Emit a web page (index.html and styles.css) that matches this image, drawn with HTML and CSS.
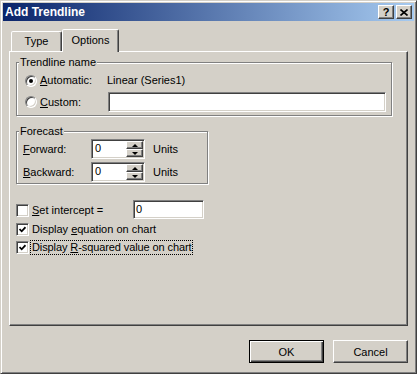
FILE: index.html
```html
<!DOCTYPE html>
<html lang="en">
<head>
    <meta charset="UTF-8">
    <meta name="viewport" content="width=device-width, initial-scale=1.0">
    <title>Add Trendline</title>
    <link rel="stylesheet" href="styles.css">
</head>
<body>
    <div class="window">
        <div class="titlebar">
            <span class="title">Add Trendline</span>
            <div class="title-buttons">
                <span class="tbtn help">?</span>
                <span class="tbtn close">
                    <svg width="8" height="7" viewBox="0 0 8 7"><path d="M0.5 0.5L7.5 6.5M7.5 0.5L0.5 6.5" stroke="#000" stroke-width="1.6" fill="none"/></svg>
                </span>
            </div>
        </div>

        <div class="tabs">
            <div class="tab">Type</div>
            <div class="tab active">Options</div>
        </div>

        <div class="panel">
            <div class="group group-name">
                <div class="group-title">Trendline name</div>
                <div class="name-grid">
                    <label class="opt">
                        <span class="radio"><span class="dot"></span></span>
                        <span><u>A</u>utomatic:</span>
                    </label>
                    <span class="auto-value">Linear (Series1)</span>
                    <label class="opt">
                        <span class="radio"></span>
                        <span><u>C</u>ustom:</span>
                    </label>
                    <span class="edit custom-edit"></span>
                </div>
            </div>

            <div class="group group-forecast">
                <div class="group-title">Forecast</div>
                <div class="fc-rows">
                    <div class="fc-row">
                        <span class="fc-label"><u>F</u>orward:</span>
                        <span class="spin">
                            <span class="spin-value">0</span>
                            <span class="spin-btns">
                                <span class="spin-btn"><span class="arrow-up"></span></span>
                                <span class="spin-btn"><span class="arrow-down"></span></span>
                            </span>
                        </span>
                        <span class="units">Units</span>
                    </div>
                    <div class="fc-row">
                        <span class="fc-label"><u>B</u>ackward:</span>
                        <span class="spin">
                            <span class="spin-value">0</span>
                            <span class="spin-btns">
                                <span class="spin-btn"><span class="arrow-up"></span></span>
                                <span class="spin-btn"><span class="arrow-down"></span></span>
                            </span>
                        </span>
                        <span class="units">Units</span>
                    </div>
                </div>
            </div>

            <div class="check-row intercept-row">
                <label class="chk intercept-label">
                    <span class="check"></span>
                    <span class="chk-text"><u>S</u>et intercept =</span>
                </label>
                <span class="edit intercept-edit">0</span>
            </div>

            <div class="check-row equation-row">
                <label class="chk">
                    <span class="check">
                        <svg width="7" height="7" viewBox="0 0 7 7"><path d="M0.5 3L2.7 5.3L6.5 1.2" stroke="#000" stroke-width="1.8" fill="none"/></svg>
                    </span>
                    <span class="chk-text">Display <u>e</u>quation on chart</span>
                </label>
            </div>

            <div class="check-row rsq-row">
                <label class="chk">
                    <span class="check">
                        <svg width="7" height="7" viewBox="0 0 7 7"><path d="M0.5 3L2.7 5.3L6.5 1.2" stroke="#000" stroke-width="1.8" fill="none"/></svg>
                    </span>
                    <span class="chk-text focused">Display <u>R</u>-squared value on chart</span>
                </label>
            </div>
        </div>

        <div class="buttons">
            <button type="button" class="btn default">OK</button>
            <button type="button" class="btn">Cancel</button>
        </div>
    </div>
</body>
</html>
```

FILE: styles.css
```css
:root {
    --face: #d4d0c8;
    --shadow: #808080;
    --dark: #404040;
    --light: #ffffff;
}

body {
    margin: 0;
    background: var(--face);
    font-family: 'Liberation Sans', Arial, sans-serif;
    font-size: 11px;
    line-height: 13px;
    color: #000;
}

u {
    text-decoration: underline;
    text-underline-offset: 1px;
}

.window {
    width: 417px;
    height: 374px;
    box-sizing: border-box;
    border: 1px solid;
    border-color: var(--face) var(--dark) var(--dark) var(--face);
    box-shadow: inset 1px 1px var(--light), inset -1px -1px var(--shadow);
    padding: 2px;
    background: var(--face);
}

/* title bar */
.titlebar {
    height: 18px;
    display: flex;
    align-items: center;
    justify-content: space-between;
    padding: 0 2px;
    background: linear-gradient(to right, #0a246a, #a6caf0);
}

.title {
    color: #fff;
    font-weight: bold;
    font-size: 12px;
}

.title-buttons {
    display: flex;
    gap: 2px;
}

.tbtn {
    width: 16px;
    height: 14px;
    box-sizing: border-box;
    display: flex;
    align-items: center;
    justify-content: center;
    background: var(--face);
    border: 1px solid;
    border-color: var(--light) var(--dark) var(--dark) var(--light);
    box-shadow: inset -1px -1px var(--shadow);
    font-weight: bold;
    font-size: 11px;
    line-height: 12px;
}

/* tabs */
.tabs {
    display: flex;
    align-items: flex-end;
    height: 22px;
    margin: 8px 0 0 8px;
}

.tab {
    height: 20px;
    width: 51px;
    box-sizing: border-box;
    border: 1px solid;
    border-bottom: none;
    border-color: var(--light) var(--dark) transparent var(--light);
    box-shadow: inset -1px 0 var(--shadow);
    border-radius: 2px 2px 0 0;
    padding-top: 3px;
    text-align: center;
    background: var(--face);
}

.tab.active {
    height: 23px;
    width: 57px;
    margin-bottom: -1px;
    padding-top: 4px;
    position: relative;
    z-index: 1;
}

/* tab panel */
.panel {
    margin-left: 6px;
    width: 399px;
    height: 275px;
    box-sizing: border-box;
    border: 1px solid;
    border-color: var(--light) var(--dark) var(--dark) var(--light);
    box-shadow: inset -1px -1px var(--shadow);
    padding: 10px 0 0 6px;
}

.group {
    box-sizing: border-box;
    border: 1px solid var(--shadow);
    box-shadow: inset 1px 1px var(--light), 1px 1px var(--light);
}

.group-title {
    width: fit-content;
    margin: -7px 0 0 2px;
    padding: 0 1px;
    background: var(--face);
}

.group-name {
    width: 376px;
    padding-bottom: 3px;
}

.name-grid {
    display: grid;
    grid-template-columns: 82px 279px;
    grid-template-rows: 13px 20px;
    row-gap: 5px;
    align-items: center;
    margin: 5px 0 0 8px;
}

.opt {
    display: flex;
    align-items: center;
    gap: 3px;
}

.radio {
    width: 12px;
    height: 12px;
    box-sizing: border-box;
    border-radius: 50%;
    border: 1px solid;
    border-color: var(--shadow) var(--light) var(--light) var(--shadow);
    box-shadow: inset 1px 1px var(--dark), inset -1px -1px var(--face);
    background: #fff;
    display: flex;
    align-items: center;
    justify-content: center;
}

.dot {
    width: 4px;
    height: 4px;
    border-radius: 50%;
    background: #000;
}

.edit {
    display: block;
    box-sizing: border-box;
    height: 20px;
    border: 1px solid;
    border-color: var(--shadow) var(--light) var(--light) var(--shadow);
    box-shadow: inset 1px 1px var(--dark), inset -1px -1px var(--face);
    background: #fff;
    padding: 2px 0 0 2px;
}

.custom-edit {
    margin-left: 1px;
    width: 278px;
}

.group-forecast {
    width: 192px;
    margin-top: 15px;
}

.fc-rows {
    margin: 1px 0 1px 6px;
    display: flex;
    flex-direction: column;
    gap: 3px;
}

.fc-row {
    display: flex;
    align-items: center;
    height: 20px;
}

.fc-label {
    width: 68px;
}

.spin {
    display: flex;
    width: 54px;
    height: 20px;
    box-sizing: border-box;
    border: 1px solid;
    border-color: var(--shadow) var(--light) var(--light) var(--shadow);
    box-shadow: inset 1px 1px var(--dark), inset -1px -1px var(--face);
    background: #fff;
    padding: 1px;
}

.spin-value {
    flex: 1;
    padding: 1px 0 0 2px;
}

.spin-btns {
    width: 17px;
    display: flex;
    flex-direction: column;
}

.spin-btn {
    flex: 1;
    box-sizing: border-box;
    display: flex;
    align-items: center;
    justify-content: center;
    background: var(--face);
    border: 1px solid;
    border-color: var(--light) var(--dark) var(--dark) var(--light);
    box-shadow: inset -1px -1px var(--shadow);
}

.arrow-up,
.arrow-down {
    width: 0;
    height: 0;
    border-left: 3px solid transparent;
    border-right: 3px solid transparent;
}

.arrow-up {
    border-bottom: 3px solid #000;
}

.arrow-down {
    border-top: 3px solid #000;
}

.units {
    margin-left: 8px;
}

/* check boxes */
.check-row {
    display: flex;
    align-items: center;
}

.intercept-row {
    margin-top: 16px;
    height: 19px;
    align-items: flex-start;
}

.intercept-label {
    width: 117px;
    margin-top: 4px;
}

.intercept-edit {
    width: 71px;
    height: 19px;
    padding: 2px 0 0 2px;
}

.equation-row {
    margin-top: 4px;
    height: 13px;
}

.rsq-row {
    margin-top: 4px;
    height: 15px;
}

.chk {
    display: flex;
    align-items: center;
}

.check {
    width: 13px;
    height: 13px;
    box-sizing: border-box;
    border: 1px solid;
    border-color: var(--shadow) var(--light) var(--light) var(--shadow);
    box-shadow: inset 1px 1px var(--dark), inset -1px -1px var(--face);
    background: #fff;
    display: flex;
    align-items: center;
    justify-content: center;
}

.chk-text {
    margin-left: 3px;
}

.chk-text.focused {
    margin-left: 1px;
    padding: 0 1px;
    border: 1px dotted #000;
    letter-spacing: -0.1px;
}

/* dialog buttons */
.buttons {
    display: flex;
    justify-content: flex-end;
    gap: 9px;
    width: 399px;
    margin: 14px 0 0 6px;
}

.btn {
    width: 75px;
    height: 23px;
    box-sizing: border-box;
    font-family: inherit;
    font-size: 11px;
    color: #000;
    background: var(--face);
    border: 1px solid;
    border-color: var(--light) var(--dark) var(--dark) var(--light);
    box-shadow: inset -1px -1px var(--shadow);
    padding: 0;
}

.btn.default {
    border-color: #000;
    box-shadow: inset 1px 1px var(--light), inset -1px -1px var(--dark), inset -2px -2px var(--shadow);
}
```
